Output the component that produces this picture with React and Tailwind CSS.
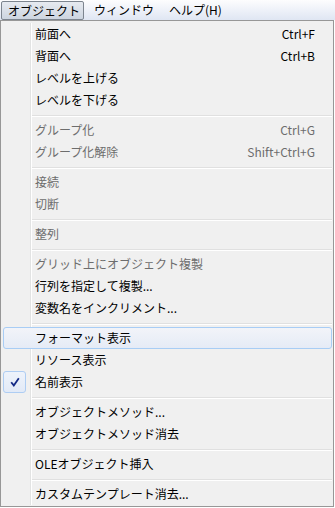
import React from 'react';

const groups = [
  [
    { label: '前面へ', key: 'Ctrl+F' },
    { label: '背面へ', key: 'Ctrl+B' },
    { label: 'レベルを上げる' },
    { label: 'レベルを下げる' },
  ],
  [
    { label: 'グループ化', key: 'Ctrl+G', disabled: true },
    { label: 'グループ化解除', key: 'Shift+Ctrl+G', disabled: true },
  ],
  [
    { label: '接続', disabled: true },
    { label: '切断', disabled: true },
  ],
  [{ label: '整列', disabled: true }],
  [
    { label: 'グリッド上にオブジェクト複製', disabled: true },
    { label: '行列を指定して複製...' },
    { label: '変数名をインクリメント...' },
  ],
  [
    { label: 'フォーマット表示', hover: true },
    { label: 'リソース表示' },
    { label: '名前表示', checked: true },
  ],
  [
    { label: 'オブジェクトメソッド...' },
    { label: 'オブジェクトメソッド消去' },
  ],
  [{ label: 'OLEオブジェクト挿入' }],
  [{ label: 'カスタムテンプレート消去...' }],
];

const Gutter = ({ checked }) => (
  <div className="flex h-full shrink-0">
    <div className="w-[27px] h-full flex items-center">
      {checked && (
        <div className="w-[23px] h-[22px] rounded-[3px] border border-[#aecdf3] bg-gradient-to-b from-[#eef3fb] to-[#e2eaf7] flex items-center justify-center">
          <svg width="10" height="10" viewBox="0 0 10 10">
            <path d="M1.2 5.2 L3.8 8.4 L8.8 1.2" fill="none" stroke="#142a86" strokeWidth="1.8" strokeLinejoin="miter" />
          </svg>
        </div>
      )}
    </div>
    <div className="w-px h-full bg-[#e2e3e3]" />
    <div className="w-px h-full bg-white" />
  </div>
);

const Row = ({ item }) => {
  if (item.hover) {
    return (
      <div className="h-[22px] flex items-center rounded-[3px] border border-[#a8cdf5] bg-gradient-to-b from-[#f2f4f9] to-[#e5ebf6] pl-[31px] pr-[16px] text-black">
        <span className="flex-1">{item.label}</span>
        {item.key && <span>{item.key}</span>}
      </div>
    );
  }
  return (
    <div className={`h-[22px] flex items-center ${item.disabled ? 'text-[#6d6d6d]' : 'text-black'}`}>
      <Gutter checked={item.checked} />
      <span className="flex-1 pl-[3px]">{item.label}</span>
      {item.key && <span className="pr-[17px]">{item.key}</span>}
    </div>
  );
};

const Separator = () => (
  <div className="h-[8px] flex">
    <Gutter />
    <div className="flex-1 flex flex-col pt-[4px]">
      <div className="h-px bg-[#e0e0e0]" />
      <div className="h-px bg-white" />
    </div>
  </div>
);

export default function App() {
  return (
    <div
      className="w-[335px] h-[508px] bg-white overflow-hidden text-[12px] leading-none"
      style={{ fontFamily: '"Noto Sans CJK JP", "Noto Sans", sans-serif' }}
    >
      <div className="h-[20px] flex items-start bg-gradient-to-b from-[#fdfdfe] to-[#dfe6f3]">
        <div className="mt-[1px] ml-[1px] h-[19px] w-[83px] rounded-[2px] border border-[#7d858f] bg-gradient-to-b from-[#e6eaf0] to-[#cdd5e0] flex items-center pl-[6px] text-black">
          オブジェクト
        </div>
        <div className="h-[20px] flex items-center pl-[10px] text-black">ウィンドウ</div>
        <div className="h-[20px] flex items-center pl-[15px] text-black">ヘルプ(H)</div>
      </div>
      <div className="w-[334px] border border-[#979797] bg-[#f0f0f0] pt-[2px] pb-[1px] pl-[2px] pr-[1px]">
        {groups.map((g, gi) => (
          <React.Fragment key={gi}>
            {gi > 0 && <Separator />}
            {g.map((item, ii) => (
              <Row key={ii} item={item} />
            ))}
          </React.Fragment>
        ))}
      </div>
    </div>
  );
}
